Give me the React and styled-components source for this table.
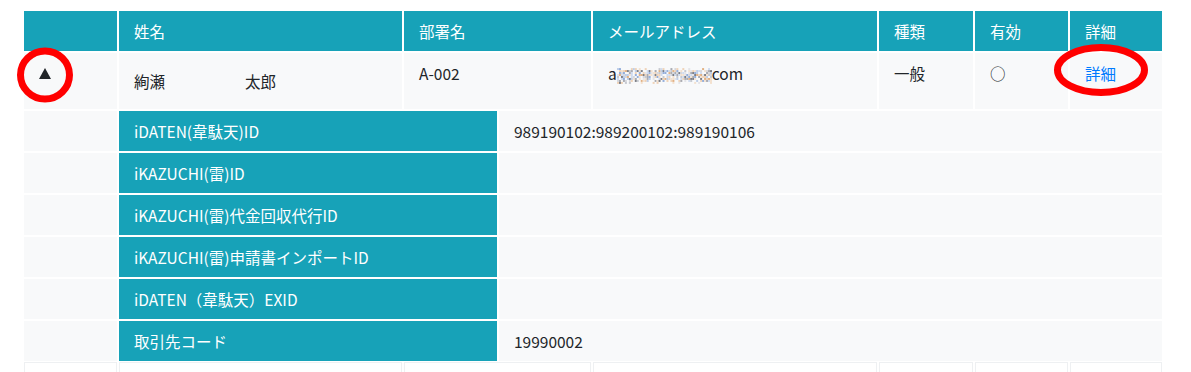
import React from "react";
import styled, { createGlobalStyle } from "styled-components";

const GlobalStyle = createGlobalStyle`
  html, body {
    margin: 0;
    padding: 0;
    background: #ffffff;
    overflow: hidden;
  }
  body {
    font-family: "Noto Sans CJK JP", "Noto Sans", sans-serif;
    font-size: 15.5px;
    color: #212529;
  }
`;

const Page = styled.div`
  padding: 11px 0 0 24px;
`;

const Table = styled.div`
  position: relative;
  width: 1138px;
  display: flex;
  flex-direction: column;
  gap: 2px;
`;

const Row = styled.div`
  display: flex;
  gap: 2px;
  height: ${(p) => p.$h}px;
  flex: none;
`;

const HeadCell = styled.div`
  width: ${(p) => p.$w}px;
  flex: none;
  box-sizing: border-box;
  background: #17a2b8;
  color: #ffffff;
  display: flex;
  align-items: center;
  padding: 0 15px;
  line-height: 22px;
`;

const Cell = styled.div`
  width: ${(p) => p.$w}px;
  flex: none;
  box-sizing: border-box;
  background: #f8f9fa;
  padding: 9px 15px 0;
  line-height: 22px;
  white-space: nowrap;
`;

const NameCell = styled(Cell)`
  display: flex;
  align-items: center;
  padding-top: 0;
`;

const NamePart = styled.span`
  display: inline-block;
  min-width: ${(p) => p.$min || 0}px;
`;

const ToggleCell = styled(Cell)`
  padding-top: 15px;
`;

const Caret = styled.span`
  display: block;
  width: 0;
  height: 0;
  border-left: 6.5px solid transparent;
  border-right: 6.5px solid transparent;
  border-bottom: 11px solid #212529;
`;

const DetailLink = styled.a`
  color: #007bff;
  text-decoration: none;
`;

const Masked = styled.svg`
  display: inline-block;
  vertical-align: -4px;
`;

const LabelCell = styled.div`
  width: ${(p) => p.$w}px;
  flex: none;
  box-sizing: border-box;
  background: #17a2b8;
  color: #ffffff;
  display: flex;
  align-items: center;
  padding: 0 15px;
  white-space: nowrap;
`;

const ValueCell = styled.div`
  width: ${(p) => p.$w}px;
  flex: none;
  box-sizing: border-box;
  background: #f8f9fa;
  display: flex;
  align-items: center;
  padding: 0 15px;
  white-space: nowrap;
`;

const BlankCell = styled.div`
  width: ${(p) => p.$w}px;
  flex: none;
  box-sizing: border-box;
  background: #ffffff;
  border: 1px solid #eef0f2;
`;

const NextRow = styled(Row)`
  margin-top: -1px;
`;

const Mark = styled.svg`
  position: absolute;
  left: ${(p) => p.$x}px;
  top: ${(p) => p.$y}px;
  pointer-events: none;
  overflow: visible;
`;

const COLS = [93, 283, 187, 284, 94, 93, 92];
const HEADERS = ["", "姓名", "部署名", "メールアドレス", "種類", "有効", "詳細"];

const DETAILS = [
  ["iDATEN(韋駄天)ID", "989190102:989200102:989190106"],
  ["iKAZUCHI(雷)ID", ""],
  ["iKAZUCHI(雷)代金回収代行ID", ""],
  ["iKAZUCHI(雷)申請書インポートID", ""],
  ["iDATEN（韋駄天）EXID", ""],
  ["取引先コード", "19990002"],
];

function mosaic() {
  let seed = 98765;
  const rnd = () => {
    seed = (seed * 1103515245 + 12345) & 0x7fffffff;
    return seed / 0x7fffffff;
  };
  const palette = [
    "#e4e4e8", "#d6d7dc", "#c6c9d0", "#efd3b8", "#e2b183",
    "#bccde8", "#93aedb", "#7d7f86", "#f3e1cf", "#cfdbf0", "#a9abb2",
  ];
  const rects = [];
  for (let y = 0; y < 16; y += 2) {
    for (let x = 0; x < 96; x += 2) {
      const edge = y < 2 || y > 13;
      const r = rnd();
      if (r < (edge ? 0.7 : 0.2)) continue;
      const c = palette[Math.floor(rnd() * palette.length)];
      rects.push(<rect key={`${x}-${y}`} x={x} y={y} width="2" height="2" fill={c} />);
    }
  }
  return rects;
}
const MOSAIC = mosaic();

export default function App() {
  return (
    <>
      <GlobalStyle />
      <Page>
        <Table>
          <Row $h={40}>
            {HEADERS.map((h, i) => (
              <HeadCell key={i} $w={COLS[i]}>{h}</HeadCell>
            ))}
          </Row>
          <Row $h={56}>
            <ToggleCell $w={COLS[0]}>
              <Caret />
            </ToggleCell>
            <NameCell $w={COLS[1]}>
              <NamePart $min={111}>絢瀬</NamePart>
              <NamePart>太郎</NamePart>
            </NameCell>
            <Cell $w={COLS[2]}>A-002</Cell>
            <Cell $w={COLS[3]}>
              a
              <Masked width="95" height="16" viewBox="0 0 96 16">
                {MOSAIC}
              </Masked>
              com
            </Cell>
            <Cell $w={COLS[4]}>一般</Cell>
            <Cell $w={COLS[5]}>○</Cell>
            <Cell $w={COLS[6]}>
              <DetailLink href="#">詳細</DetailLink>
            </Cell>
          </Row>
          {DETAILS.map(([label, value], i) => (
            <Row key={i} $h={40}>
              <ValueCell $w={93} />
              <LabelCell $w={378}>{label}</LabelCell>
              <ValueCell $w={663}>{value}</ValueCell>
            </Row>
          ))}
          <NextRow $h={40}>
            {COLS.map((w, i) => (
              <BlankCell key={i} $w={w} />
            ))}
          </NextRow>
          <Mark $x={-7} $y={36} width="56" height="56" viewBox="0 0 56 56">
            <ellipse cx="28" cy="28" rx="24.5" ry="24" fill="none" stroke="#ff0000" strokeWidth="7" />
          </Mark>
          <Mark $x={1030} $y={33} width="94" height="52" viewBox="0 0 94 52">
            <ellipse cx="47" cy="26" rx="43.5" ry="22.5" fill="none" stroke="#ff0000" strokeWidth="7" />
          </Mark>
        </Table>
      </Page>
    </>
  );
}
